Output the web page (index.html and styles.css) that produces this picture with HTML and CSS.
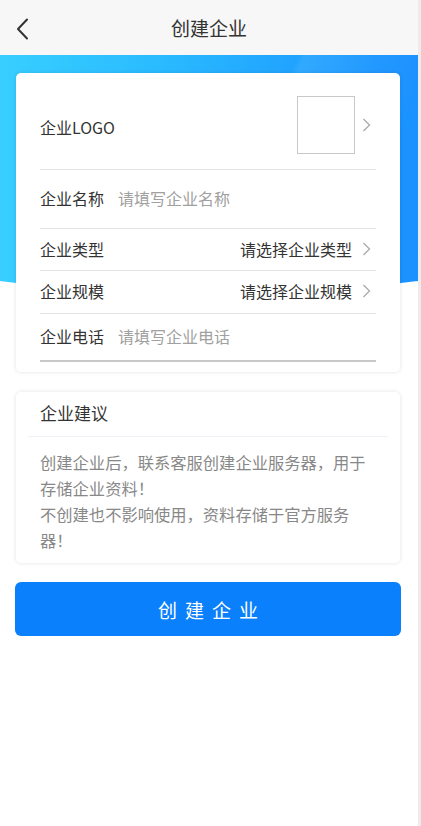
FILE: index.html
```html
<!DOCTYPE html>
<html lang="zh-CN">
<head>
    <meta charset="UTF-8">
    <meta name="viewport" content="width=device-width, initial-scale=1.0">
    <title>创建企业</title>
    <link rel="stylesheet" href="styles.css">
</head>
<body>
<div class="app">
    <header class="topbar">
        <button class="back" aria-label="返回">
            <svg width="14" height="22" viewBox="0 0 14 22"><polyline points="11,1.5 2,11 11,20.5" fill="none" stroke="#333" stroke-width="2" stroke-linecap="round" stroke-linejoin="round"/></svg>
        </button>
        <h1>创建企业</h1>
    </header>

    <div class="hero"></div>

    <main class="content">
        <section class="card form">
            <div class="row logo-row">
                <span class="label">企业LOGO</span>
                <div class="logo-pick">
                    <div class="logo-box"></div>
                    <svg class="chev" width="9" height="14" viewBox="0 0 9 14"><polyline points="1.5,1 7.5,7 1.5,13" fill="none" stroke="#aaa" stroke-width="1.3"/></svg>
                </div>
            </div>
            <div class="row name-row">
                <span class="label">企业名称</span>
                <input class="field" type="text" placeholder="请填写企业名称">
            </div>
            <div class="row pick-row type-row">
                <span class="label">企业类型</span>
                <span class="value">请选择企业类型
                    <svg class="chev" width="9" height="14" viewBox="0 0 9 14"><polyline points="1.5,1 7.5,7 1.5,13" fill="none" stroke="#aaa" stroke-width="1.3"/></svg>
                </span>
            </div>
            <div class="row pick-row">
                <span class="label">企业规模</span>
                <span class="value">请选择企业规模
                    <svg class="chev" width="9" height="14" viewBox="0 0 9 14"><polyline points="1.5,1 7.5,7 1.5,13" fill="none" stroke="#aaa" stroke-width="1.3"/></svg>
                </span>
            </div>
            <div class="row phone-row">
                <span class="label">企业电话</span>
                <input class="field" type="text" placeholder="请填写企业电话">
            </div>
        </section>

        <section class="card tips">
            <h2>企业建议</h2>
            <p>创建企业后，联系客服创建企业服务器，用于存储企业资料！<br>不创建也不影响使用，资料存储于官方服务器！</p>
        </section>

        <button class="submit">创建企业</button>
    </main>
</div>
</body>
</html>
```

FILE: styles.css
```css
/* 全局样式 */
html {
    background-color: #ececec;
}

body {
    margin: 0;
    font-family: "Noto Sans CJK SC", "Noto Sans", sans-serif;
    color: #333;
}

.app {
    width: 418px;
    min-height: 100vh;
    background-color: #fff;
    overflow: hidden;
}

/* 顶部栏 */
.topbar {
    height: 55px;
    background-color: #f7f7f7;
    display: flex;
    align-items: center;
    justify-content: center;
    position: relative;
}

.topbar h1 {
    margin: 0;
    font-size: 19px;
    font-weight: 400;
    color: #333;
}

.back {
    position: absolute;
    left: 13px;
    top: 18px;
    border: none;
    background: none;
    padding: 0;
    width: 20px;
    height: 22px;
}

/* 蓝色背景 */
.hero {
    height: 238px;
    width: 585px;
    margin-left: -84px;
    border-radius: 0 0 50% 50% / 0 0 40px 40px;
    background:
        linear-gradient(115deg, rgba(255,255,255,0) 55%, rgba(255,255,255,0.08) 56%, rgba(255,255,255,0) 75%),
        linear-gradient(90deg, #3fd9ff 0%, #2bbcff 40%, #1a94ff 80%, #1d8cff 100%);
}

.content {
    margin-top: -220px;
    padding: 0 17px 40px 15px;
    display: flex;
    flex-direction: column;
}

.card {
    background-color: #fff;
    border-radius: 5px;
    margin: 0 1px;
    box-shadow: 0 0 4px rgba(0, 0, 0, 0.12);
}

/* 表单卡片 */
.form {
    padding: 0 24px 10px;
}

.row {
    box-sizing: border-box;
    display: flex;
    align-items: center;
    border-bottom: 1px solid #e3e3e3;
    font-size: 16px;
    padding-bottom: 2px;
}

.label {
    color: #333;
    width: 63px;
    flex-shrink: 0;
    white-space: nowrap;
}

.logo-row {
    height: 97px;
    padding-top: 8px;
    padding-bottom: 0;
    justify-content: space-between;
}

.logo-row .label {
    margin-top: 4px;
}

.logo-pick {
    display: flex;
    align-items: center;
    gap: 7px;
    margin-right: 5px;
}

.logo-box {
    width: 56px;
    height: 56px;
    border: 1px solid #c8c8c8;
}

.name-row {
    height: 59px;
}

.pick-row {
    height: 43px;
    justify-content: space-between;
}

.type-row {
    height: 42px;
}

.phone-row {
    height: 48px;
    border-bottom: 2px solid #c8c8c8;
}

.field {
    margin-left: 15px;
    border: none;
    outline: none;
    font-family: inherit;
    font-size: 16px;
    color: #333;
    padding: 0;
    flex: 1;
    min-width: 0;
}

.field::placeholder {
    color: #a0a0a0;
}

.value {
    display: flex;
    align-items: center;
    gap: 10px;
    margin-right: 5px;
    color: #333;
}

/* 建议卡片 */
.tips {
    margin-top: 20px;
    padding: 0 12px 10px;
}

.tips h2 {
    margin: 0;
    height: 44px;
    line-height: 42px;
    padding-left: 12px;
    font-size: 17px;
    font-weight: 400;
    color: #333;
    border-bottom: 1px solid #edf0f4;
}

.tips p {
    margin: 12px 12px 0;
    font-size: 16.3px;
    line-height: 26px;
    color: #888;
}

/* 按钮 */
.submit {
    margin-top: 19px;
    height: 54px;
    border: none;
    border-radius: 6px;
    background-color: #0a80fc;
    color: #fff;
    font-family: inherit;
    font-size: 19px;
    letter-spacing: 8px;
    text-indent: 8px;
    cursor: pointer;
}
```
